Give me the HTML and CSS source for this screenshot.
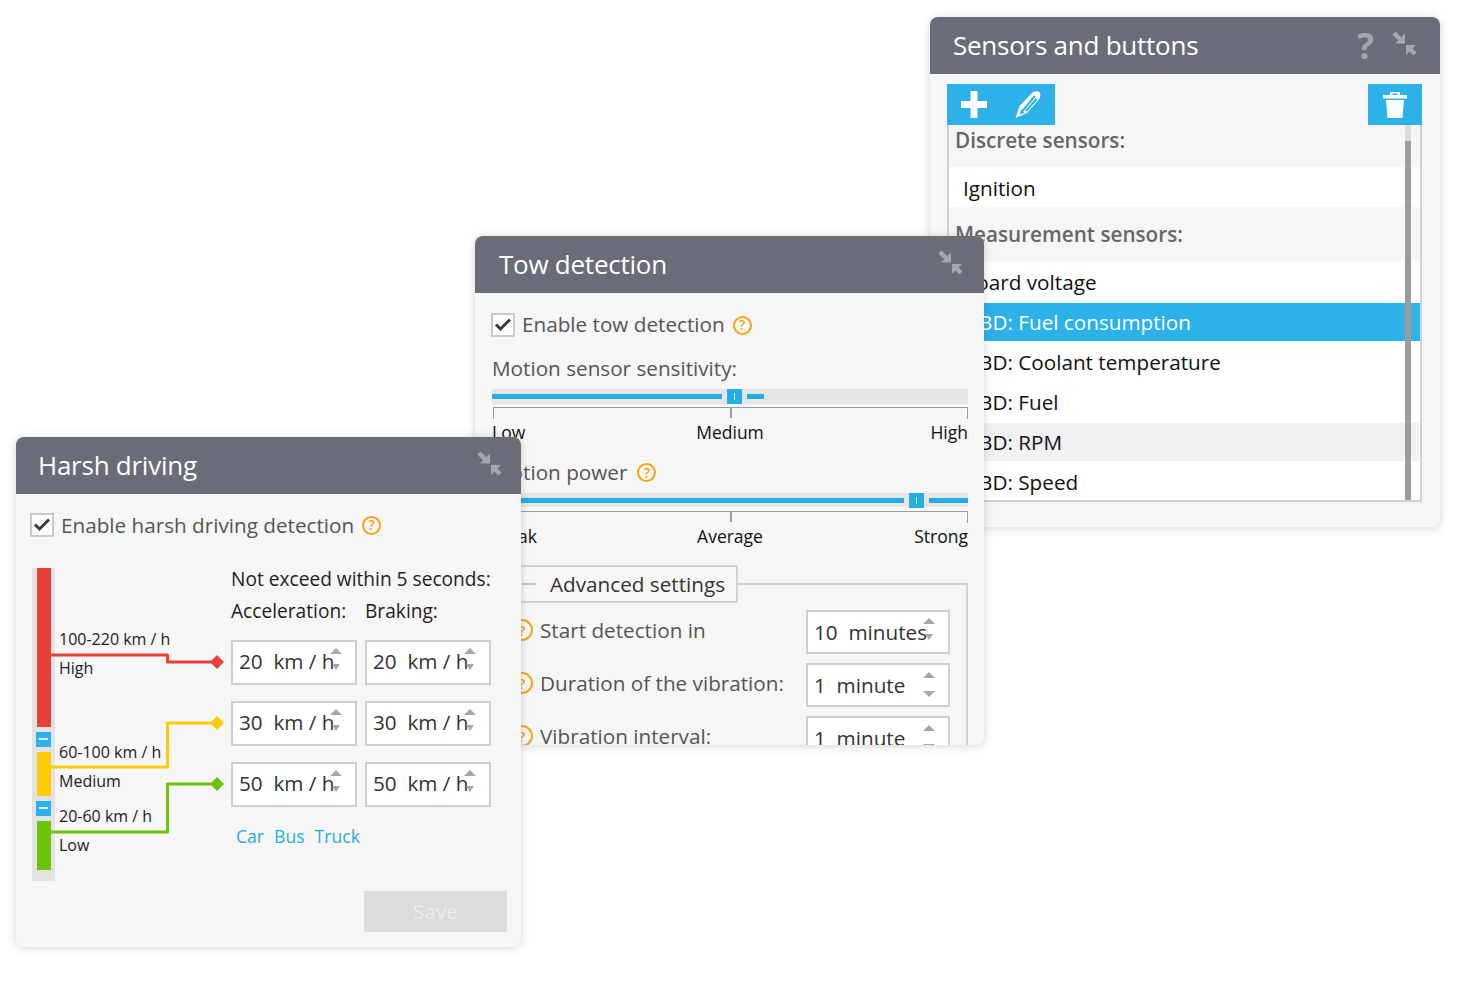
FILE: index.html
```html
<!DOCTYPE html>
<html lang="en">
<head>
<meta charset="utf-8">
<title>Sensors</title>
<link rel="stylesheet" href="styles.css">
</head>
<body>
<svg class="defs" width="0" height="0" aria-hidden="true">
  <symbol id="compress" viewBox="0 0 25 25">
    <path d="M2 2l7.500 7.500" class="arrow-line"/>
    <path d="M13 2.500v10H3z" class="arrow-head"/>
    <path d="M23 23l-6.500-6.500" class="arrow-line"/>
    <path d="M14 14h10L14 24z" class="arrow-head"/>
  </symbol>
  <symbol id="check" viewBox="0 0 20 20">
    <path d="M3 9.500l4.500 4.500L17 4.500" fill="none" stroke="#3a3a3c" stroke-width="3"/>
  </symbol>
</svg>

<section class="window win-sensors">
  <header class="win-head">
    <h2>Sensors and buttons</h2>
    <span class="qmark">?</span>
    <svg class="compress"><use href="#compress"/></svg>
  </header>
  <div class="sensors-body">
    <div class="toolbar">
      <div class="tool-group">
        <svg class="tool" viewBox="0 0 54 41"><path d="M23.500 7h7v10H40v7h-9.500v10h-7V24H14v-7h9.500z" fill="#fff"/></svg>
        <svg class="tool" viewBox="0 0 54 41"><path d="M14.500 34l4-12L31 9c3-2.500 7-2.500 8 0 1 2.500 0 5-2 7.500L26 29z" fill="#fff"/><path d="M21 27.500L34 12M25 27l10.500-12" fill="none" stroke="#2cb1e8" stroke-width="2"/><path d="M18.500 30.500l5-1.500-3.500-3z" fill="#2cb1e8"/></svg>
      </div>
      <div class="tool-group">
        <svg class="tool" viewBox="0 0 54 41"><path d="M22 8h10v3h7v3.500H15V11h7zM24.500 9.500V11h5V9.500z" fill="#fff" fill-rule="evenodd"/><path d="M18 16h18l-1.500 18h-15z" fill="#fff"/></svg>
      </div>
    </div>
    <div class="list">
      <div class="list-head first">Discrete sensors:</div>
      <div class="list-item tall">Ignition</div>
      <div class="list-head second">Measurement sensors:</div>
      <div class="list-item">Board voltage</div>
      <div class="list-item selected">OBD: Fuel consumption</div>
      <div class="list-item">OBD: Coolant temperature</div>
      <div class="list-item">OBD: Fuel</div>
      <div class="list-item hover">OBD: RPM</div>
      <div class="list-item">OBD: Speed</div>
      <div class="scrollbar"></div>
    </div>
  </div>
</section>

<section class="window win-tow">
  <header class="win-head">
    <h2>Tow detection</h2>
    <svg class="compress"><use href="#compress"/></svg>
  </header>
  <div class="tow-body">
    <label class="check-row">
      <span class="checkbox"><svg><use href="#check"/></svg></span>
      <span class="check-label">Enable tow detection</span>
      <span class="help">?</span>
    </label>
    <div class="field-title">Motion sensor sensitivity:</div>
    <div class="slider">
      <span class="fill" style="width:230px"></span>
      <span class="thumb"></span>
      <span class="fill" style="width:17px"></span>
    </div>
    <div class="ruler"></div>
    <div class="ruler-labels"><span>Low</span><span>Medium</span><span>High</span></div>
    <div class="field-title power"><span>Motion power</span> <span class="help">?</span></div>
    <div class="slider short">
      <span class="fill" style="width:412px"></span>
      <span class="thumb"></span>
      <span class="fill" style="width:39px"></span>
    </div>
    <div class="ruler"></div>
    <div class="ruler-labels"><span>Weak</span><span>Average</span><span>Strong</span></div>
    <div class="fieldset">
      <div class="legend"><span class="legend-minus"></span>Advanced settings</div>
      <div class="adv-row">
        <span class="help">?</span><span class="adv-label">Start detection in</span>
        <div class="spin wide">10&nbsp; minutes<span class="arrows"><i class="up"></i><i class="down"></i></span></div>
      </div>
      <div class="adv-row">
        <span class="help">?</span><span class="adv-label">Duration of the vibration:</span>
        <div class="spin wide">1&nbsp; minute<span class="arrows apart"><i class="up"></i><i class="down"></i></span></div>
      </div>
      <div class="adv-row">
        <span class="help">?</span><span class="adv-label">Vibration interval:</span>
        <div class="spin wide">1&nbsp; minute<span class="arrows apart"><i class="up"></i><i class="down"></i></span></div>
      </div>
    </div>
  </div>
</section>

<section class="window win-harsh">
  <header class="win-head">
    <h2>Harsh driving</h2>
    <svg class="compress"><use href="#compress"/></svg>
  </header>
  <div class="harsh-body">
    <label class="check-row">
      <span class="checkbox"><svg><use href="#check"/></svg></span>
      <span>Enable harsh driving detection</span>
      <span class="help">?</span>
    </label>
    <div class="harsh-main">
      <div class="diagram">
        <div class="strip">
          <div class="seg red"></div>
          <div class="minus"></div>
          <div class="seg yellow"></div>
          <div class="minus"></div>
          <div class="seg green"></div>
        </div>
        <svg class="wires" viewBox="0 0 199 313">
          <path d="M19 87H135.500V94H182" class="wire" stroke="#e5403a"/>
          <path d="M185 87l7 7-7 7-7-7z" fill="#e5403a"/>
          <path d="M19 199H135.500V155H182" class="wire" stroke="#ffc907"/>
          <path d="M185 148l7 7-7 7-7-7z" fill="#ffc907"/>
          <path d="M19 264H135.500V216H182" class="wire" stroke="#6cc30c"/>
          <path d="M185 209l7 7-7 7-7-7z" fill="#6cc30c"/>
        </svg>
        <span class="d-label l1">100-220 km / h</span>
        <span class="d-label l2">High</span>
        <span class="d-label l3">60-100 km / h</span>
        <span class="d-label l4">Medium</span>
        <span class="d-label l5">20-60 km / h</span>
        <span class="d-label l6">Low</span>
      </div>
      <div class="limits">
        <div class="limits-title">Not exceed within 5 seconds:</div>
        <div class="limits-cols"><span>Acceleration:</span><span>Braking:</span></div>
        <div class="spin-grid">
          <div class="spin">20&nbsp; km / h<span class="arrows"><i class="up"></i><i class="down"></i></span></div>
          <div class="spin">20&nbsp; km / h<span class="arrows"><i class="up"></i><i class="down"></i></span></div>
          <div class="spin">30&nbsp; km / h<span class="arrows"><i class="up"></i><i class="down"></i></span></div>
          <div class="spin">30&nbsp; km / h<span class="arrows"><i class="up"></i><i class="down"></i></span></div>
          <div class="spin">50&nbsp; km / h<span class="arrows"><i class="up"></i><i class="down"></i></span></div>
          <div class="spin">50&nbsp; km / h<span class="arrows"><i class="up"></i><i class="down"></i></span></div>
        </div>
        <div class="presets"><a>Car</a><a>Bus</a><a>Truck</a></div>
      </div>
    </div>
    <div class="save-row"><button class="save" type="button">Save</button></div>
  </div>
</section>
</body>
</html>
```

FILE: styles.css
```css
* { box-sizing: border-box; }
html, body { margin: 0; padding: 0; }
body {
  position: relative;
  width: 1460px;
  height: 981px;
  overflow: hidden;
  background: #fff;
  font-family: "Open Sans", "Liberation Sans", sans-serif;
  font-size: 20.7px;
  color: #111;
}
.defs { position: absolute; }

/* windows on a free canvas */
.window {
  position: absolute;
  overflow: hidden;
  background: #f6f6f6;
  border-radius: 8px;
  box-shadow: 0 1px 8px rgba(60, 60, 70, .22);
}
.win-sensors { left: 930px; top: 17px; width: 510px; height: 510px; }
.win-tow { left: 475px; top: 236px; width: 509px; height: 509px; }
.win-harsh { left: 16px; top: 437px; width: 505px; height: 510px; }

.win-head {
  display: flex;
  align-items: center;
  height: 57px;
  background: #6a6c78;
  color: #fff;
}
.win-sensors .win-head { padding: 0 23px; }
.win-tow .win-head { padding: 0 21px 0 24px; }
.win-harsh .win-head { padding: 0 19px 0 22px; }
.win-head h2 { margin: 0 0 2px; flex: 1; font-size: 26px; font-weight: 400; letter-spacing: -.25px; line-height: 1; }
.compress { flex: none; width: 25px; height: 25px; }
.arrow-line { stroke: #a6a7ad; stroke-width: 4.5; fill: none; }
.arrow-head { fill: #a6a7ad; }
.qmark { font-size: 35px; font-weight: 700; color: #a6a7ad; margin-right: 18px; line-height: 1; }
.win-tow .compress, .win-harsh .compress { margin-top: -5px; }
.win-sensors .compress { margin-top: -4px; }

/* sensors */
.sensors-body { padding: 10px 18px 0 17px; }
.toolbar { display: flex; justify-content: space-between; height: 41px; }
.tool-group { display: flex; background: #2cb1e8; }
.tool { display: block; width: 54px; height: 41px; }
.list {
  position: relative;
  height: 377px;
  overflow: hidden;
  background: #fff;
  border-left: 2px solid #cfd0d6;
  border-right: 2px solid #cfd0d6;
  border-bottom: 2px solid #cfd0d6;
}
.list-head {
  display: flex;
  align-items: center;
  padding-left: 6px;
  font-weight: 600;
  color: #666;
  background: #f6f6f6;
}
.list-head.first { height: 42px; align-items: flex-start; padding-top: 1px; }
.list-head.second { height: 54px; padding-bottom: 1px; }
.list-item {
  display: flex;
  align-items: center;
  height: 38px;
  margin-top: 2px;
  padding-left: 14px;
  background: #fff;
  color: #111;
}
.list-item.tall { height: 40px; margin-top: 0; padding-top: 1px; }
.list-item.selected { background: #2cb1e8; color: #fff; }
.list-item.hover { background: #f1f1f3; margin-right: 1px; }
.scrollbar {
  position: absolute;
  right: 9px;
  top: 16px;
  bottom: 0;
  width: 6px;
  background: #9c9c9e;
}
.scrollbar::before {
  content: "";
  position: absolute;
  left: 0;
  right: 0;
  top: -16px;
  height: 16px;
  background: #dcdcde;
}

/* common */
.check-row { display: flex; align-items: center; height: 24px; line-height: 24px; color: #555; }
.check-label { padding-bottom: 2px; }
.checkbox {
  display: block;
  flex: none;
  width: 24px;
  height: 24px;
  margin-left: -1px;
  margin-right: 7px;
  background: #fff;
  border: 2px solid #c8c8ce;
}
.checkbox svg { display: block; width: 20px; height: 20px; }
.help {
  display: inline-flex;
  align-items: center;
  justify-content: center;
  flex: none;
  width: 19px;
  height: 19px;
  margin-left: 8px;
  border: 2px solid #f6a316;
  border-radius: 50%;
  color: #f6a316;
  font-size: 14px;
  font-weight: 600;
  line-height: 1;
}
.spin {
  position: relative;
  display: flex;
  align-items: center;
  height: 45px;
  padding: 0 0 3px 6px;
  background: #fff;
  border: 2px solid #cdcdd4;
  color: #333;
  white-space: nowrap;
}
.arrows {
  position: absolute;
  right: 13px;
  top: 6px;
  display: flex;
  flex-direction: column;
  align-items: center;
  gap: 10px;
}
.arrows.apart { gap: 13px; top: 7px; }
.arrows i { display: block; width: 0; height: 0; border-style: solid; border-color: transparent; }
.arrows .up { border-width: 0 6px 6px; border-bottom-color: #a6a7ad; }
.arrows .down { border-width: 6px 4.500px 0; border-top-color: #a6a7ad; }
.arrows.apart .down { border-width: 6px 6px 0; }

/* tow */
.tow-body { height: 452px; overflow: hidden; padding: 20px 16px 0 17px; }
.field-title { margin-top: 18px; height: 28px; line-height: 26px; color: #555; }
.field-title.power { margin-top: 14px; display: flex; align-items: flex-start; }
.field-title.power .help { margin: 4px 0 0 10px; }
.slider {
  display: flex;
  align-items: center;
  gap: 5px;
  height: 15px;
  margin-top: 6px;
  background: #e5e5e6;
}
.slider.short { height: 14px; }
.slider.short + .ruler { margin-top: 4px; }
.fill { display: block; height: 5px; background: #25ade6; }
.thumb { position: relative; display: block; width: 15px; height: 15px; background: #25ade6; flex: none; }
.thumb::after {
  content: "";
  position: absolute;
  left: 7px;
  top: 4px;
  width: 1px;
  height: 7px;
  background: #cfeefb;
}
.ruler {
  position: relative;
  height: 12px;
  margin-top: 3px;
  margin-left: 1px;
  border: 1.500px solid #9a9ba3;
  border-bottom: 0;
}
.ruler::after {
  content: "";
  position: absolute;
  left: 236px;
  top: 0;
  width: 1.500px;
  height: 10px;
  background: #9a9ba3;
}
.ruler-labels {
  display: grid;
  grid-template-columns: 1fr auto 1fr;
  height: 26px;
  font-size: 17.500px;
  line-height: 26px;
  color: #111;
}
.ruler-labels span:last-child { text-align: right; }
.fieldset {
  margin-top: 34px;
  height: 200px;
  border: 2px solid #d0d0d6;
  border-bottom: 0;
  padding-right: 16px;
}
.legend {
  display: flex;
  align-items: center;
  width: 246px;
  height: 38px;
  margin-top: -20px;
  margin-left: -2px;
  padding-left: 28px;
  background: #f6f6f6;
  border: 2px solid #d0d0d6;
  color: #333;
}
.legend-minus { width: 14px; height: 2px; margin-right: 14px; background: #c3c3c8; }
.adv-row { display: flex; align-items: center; height: 44px; margin-bottom: 9px; color: #555; }
.legend + .adv-row { margin-top: 7px; }
.adv-row .help { width: 22px; height: 22px; margin: -4px 7px 0 17px; font-size: 15px; }
.adv-label { flex: 1; white-space: nowrap; padding-bottom: 5px; }
.spin.wide { width: 144px; height: 44px; padding-bottom: 1px; }

/* harsh */
.harsh-body { padding: 19px 14px 0 15px; }
.harsh-main { display: flex; margin-top: 31px; margin-left: 1px; }
.diagram { position: relative; width: 199px; height: 313px; flex: none; font-size: 16px; }
.strip {
  display: flex;
  flex-direction: column;
  align-items: center;
  gap: 5px;
  width: 23px;
  height: 313px;
  background: #e3e3e6;
}
.seg { width: 14px; }
.seg.red { height: 159px; background: #e5403a; }
.seg.yellow { height: 44px; background: #ffc907; }
.seg.green { height: 49px; background: #6cc30c; }
.minus {
  position: relative;
  width: 15px;
  height: 15px;
  background: #2cb1e8;
}
.minus::after {
  content: "";
  position: absolute;
  left: 3px;
  top: 6px;
  width: 9px;
  height: 2px;
  background: #d5f0fb;
}
.wires { position: absolute; left: 0; top: 0; width: 199px; height: 313px; }
.wire { fill: none; stroke-width: 3; stroke-linejoin: round; }
.d-label { position: absolute; left: 27px; white-space: nowrap; line-height: 22px; color: #222; }
.l1 { top: 60px; }
.l2 { top: 89px; }
.l3 { top: 173px; }
.l4 { top: 202px; }
.l5 { top: 237px; }
.l6 { top: 266px; }
.limits { flex: none; width: 262px; color: #222; font-size: 19.150px; }
.limits-title { height: 32px; line-height: 22px; white-space: nowrap; }
.limits-cols { display: grid; grid-template-columns: 134px 126px; height: 40px; line-height: 22px; }
.spin-grid { display: grid; grid-template-columns: 126px 126px; gap: 16px 8px; font-size: 20.700px; }
.presets { display: flex; gap: 10px; margin-top: 16px; margin-left: 5px; font-size: 17.600px; line-height: 26px; color: #25ade6; }
.save-row { display: flex; justify-content: flex-end; margin-top: 10px; }
.save {
  width: 143px;
  height: 41px;
  padding: 0 0 2px;
  border: 0;
  background: #dcdcdd;
  color: #ececec;
  font: inherit;
}
```
